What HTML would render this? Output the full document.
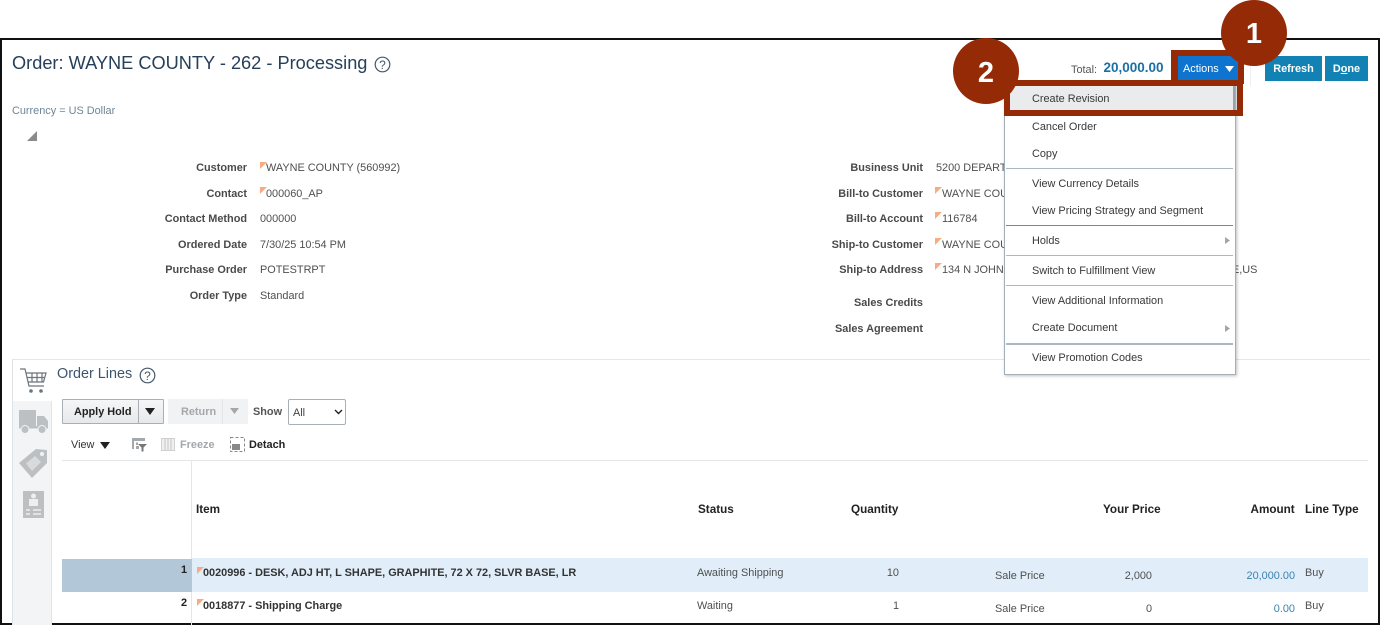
<!DOCTYPE html>
<html><head><meta charset="utf-8">
<style>
html,body{margin:0;padding:0;background:#fff}
#p{position:relative;width:1380px;height:625px;overflow:hidden;background:#fff;font-family:"Liberation Sans",sans-serif;font-size:10.9px;color:#4f4f4f;filter:blur(.3px)}
#p div,#p svg{position:absolute}
.t{white-space:nowrap;line-height:14px}
.l{font-weight:bold;text-align:right;color:#4a4a4a;white-space:nowrap;line-height:14px}
.m{color:#383838;white-space:nowrap;line-height:14px;left:1032px}
.h{font-weight:bold;color:#222;font-size:11.7px;white-space:nowrap;line-height:14px}
.f{width:0;height:0;border-top:7px solid #f8ab80;border-right:7px solid transparent}
.s{left:1006px;width:227px;height:1px;background:#a9b8c4}
.c{width:66px;height:66px;border-radius:50%;background:#952a07;color:#fff;font-weight:bold;font-size:29px;line-height:66px;text-align:center;font-family:"Liberation Sans",sans-serif}
</style></head><body><div id="p">

<div style="left:0;top:38px;width:1380px;height:587px;box-sizing:border-box;border:2px solid #111"></div>

<div class="t" style="left:12px;top:52px;font-size:18.2px;line-height:22px;color:#26405a">Order: WAYNE COUNTY - 262 - Processing</div>
<svg style="left:374px;top:56px" width="17" height="17" viewBox="0 0 17 17"><circle cx="8.500" cy="8.500" r="7.300" fill="none" stroke="#46586a" stroke-width="1.200"/><text x="8.500" y="12.800" font-size="12" text-anchor="middle" fill="#46586a" font-family="Liberation Sans">?</text></svg>
<div class="t" style="left:12px;top:104px;color:#6d8696">Currency = US Dollar</div>
<svg style="left:27px;top:131px" width="11" height="10"><path d="M0 10L10 0V10Z" fill="#8a8a8a"/></svg>

<div class="l" style="left:100px;width:147px;top:161px">Customer</div>
<div class="f" style="left:260px;top:162px"></div><div class="t" style="left:266px;top:161px">WAYNE COUNTY (560992)</div>
<div class="l" style="left:100px;width:147px;top:187px">Contact</div>
<div class="f" style="left:260px;top:187px"></div><div class="t" style="left:266px;top:187px">000060_AP</div>
<div class="l" style="left:100px;width:147px;top:212px">Contact Method</div>
<div class="t" style="left:260px;top:212px">000000</div>
<div class="l" style="left:100px;width:147px;top:238px">Ordered Date</div>
<div class="t" style="left:260px;top:238px">7/30/25 10:54 PM</div>
<div class="l" style="left:100px;width:147px;top:263px">Purchase Order</div>
<div class="t" style="left:260px;top:263px">POTESTRPT</div>
<div class="l" style="left:100px;width:147px;top:289px">Order Type</div>
<div class="t" style="left:260px;top:289px">Standard</div>

<div class="l" style="left:780px;width:143px;top:161px">Business Unit</div>
<div class="t" style="left:936px;top:161px">5200 DEPARTMENT</div>
<div class="l" style="left:780px;width:143px;top:187px">Bill-to Customer</div>
<div class="f" style="left:935px;top:187px"></div><div class="t" style="left:942px;top:187px">WAYNE COUNTY</div>
<div class="l" style="left:780px;width:143px;top:212px">Bill-to Account</div>
<div class="f" style="left:935px;top:212px"></div><div class="t" style="left:942px;top:212px">116784</div>
<div class="l" style="left:780px;width:143px;top:238px">Ship-to Customer</div>
<div class="f" style="left:935px;top:238px"></div><div class="t" style="left:942px;top:238px">WAYNE COUNTY</div>
<div class="l" style="left:780px;width:143px;top:263px">Ship-to Address</div>
<div class="f" style="left:935px;top:263px"></div><div class="t" style="left:942px;top:263px">134 N JOHNSON</div>
<div class="t" style="left:1232px;top:263px">E,US</div>
<div class="l" style="left:780px;width:143px;top:296px">Sales Credits</div>
<div class="l" style="left:780px;width:143px;top:322px">Sales Agreement</div>

<div class="t" style="left:1071px;top:63px;color:#555">Total:</div>
<div class="t" style="left:1103.500px;top:60px;font-size:13.500px;line-height:16px;font-weight:bold;color:#1a70a5">20,000.00</div>
<div style="left:1250px;top:56px;width:1px;height:30px;background:#eceff1"></div>
<div style="left:1265px;top:56px;width:57px;height:25px;background:#1282b4"></div>
<div class="t" style="left:1265px;top:62px;width:57px;text-align:center;color:#fff;font-weight:bold">Refresh</div>
<div style="left:1325px;top:56px;width:43px;height:25px;background:#1282b4"></div>
<div class="t" style="left:1325px;top:62px;width:43px;text-align:center;color:#fff;font-weight:bold">D<u>o</u>ne</div>

<div style="left:1171px;top:50px;width:73px;height:34px;background:#952a07"></div>
<div style="left:1178px;top:56px;width:60px;height:25px;background:#0f74d0"></div>
<div class="t" style="left:1183px;top:62px;color:#fff">Actions</div>
<svg style="left:1224.500px;top:66px" width="9" height="6"><path d="M0 0H9L4.500 6Z" fill="#fff"/></svg>

<div style="left:12px;top:359px;width:1358px;height:1px;background:#e4e7e9"></div>
<div style="left:12px;top:359px;width:1px;height:266px;background:#dfe3e5"></div>
<div style="left:13px;top:401px;width:38px;height:224px;background:#f3f4f5"></div>
<div style="left:51px;top:401px;width:1px;height:224px;background:#e2e5e7"></div>
<svg style="left:19px;top:367px" width="29" height="28" viewBox="0 0 29 28" fill="none" stroke="#6b757c" stroke-width="1.200"><path d="M1 2H6L10 19H25"/><path d="M7 6H27L24.500 15H9"/><path d="M8 10.500H26M13 6V15M18 6V15M23 6V15"/><circle cx="12" cy="24" r="1.200" fill="#6b757c"/><circle cx="22" cy="24" r="1.200" fill="#6b757c"/></svg>
<svg style="left:18px;top:410px" width="31" height="24" viewBox="0 0 31 24" fill="#bcc0c3"><path d="M1 0H18V16H1Z"/><path d="M19 6H26L30 11V16H19Z"/><rect x="1" y="16" width="29" height="2.500"/><circle cx="7" cy="19.500" r="4" stroke="#f3f4f5"/><circle cx="24" cy="19.500" r="4" stroke="#f3f4f5"/></svg>
<svg style="left:18px;top:447px" width="30" height="32" viewBox="0 0 30 32"><path d="M1 16L18 2L29 3V16L14 31Z" fill="#bcc0c3"/><path d="M8 16.500L17 9L23 15L14 24Z" fill="#d8dbdd"/><circle cx="24" cy="7" r="2" fill="#f3f4f5"/></svg>
<svg style="left:22px;top:490px" width="23" height="29" viewBox="0 0 23 29"><rect x="1" y="1" width="21" height="27" fill="#bcc0c3"/><circle cx="11.500" cy="6" r="2.500" fill="#eee"/><path d="M7 9H16V16H7Z" fill="#eee"/><path d="M4 20H8M11 20H19M4 24H8M11 24H19" stroke="#eee" stroke-width="1.500"/></svg>

<div class="t" style="left:57px;top:365px;font-size:14.400px;line-height:18px;color:#3c566e">Order Lines</div>
<svg style="left:139px;top:366.500px" width="17" height="17" viewBox="0 0 17 17"><circle cx="8.500" cy="8.500" r="7.300" fill="none" stroke="#46586a" stroke-width="1.200"/><text x="8.500" y="12.800" font-size="12" text-anchor="middle" fill="#46586a" font-family="Liberation Sans">?</text></svg>

<div style="left:62px;top:399px;width:100px;height:23px;border:1px solid #a8b0b6;background:linear-gradient(#f5f6f7,#e6e8ea);border-radius:1px"></div>
<div style="left:138px;top:399px;width:1px;height:24px;background:#a8b0b6"></div>
<div class="t" style="left:74px;top:405px;font-weight:bold;color:#222">Apply Hold</div>
<svg style="left:145px;top:408px" width="10" height="7"><path d="M0 0H10L5 7Z" fill="#222"/></svg>
<div style="left:168px;top:399px;width:80px;height:25px;background:#f1f2f3"></div>
<div style="left:222px;top:399px;width:1px;height:25px;background:#e3e5e7"></div>
<div class="t" style="left:181px;top:405px;font-weight:bold;color:#a3a8ac">Return</div>
<svg style="left:230px;top:408px" width="9" height="6"><path d="M0 0H9L4.500 6Z" fill="#a3a8ac"/></svg>
<div class="t" style="left:253px;top:405px;font-weight:bold;color:#555">Show</div>
<div style="left:288px;top:399px;width:56px;height:24px;border:1px solid #a8b0b6;border-radius:2px;background:#fff"></div>
<div class="t" style="left:293px;top:406px;color:#444">All</div>
<svg style="left:334px;top:409px" width="9" height="6"><path d="M1 1L4.500 4.500L8 1" fill="none" stroke="#222" stroke-width="1.400"/></svg>

<div class="t" style="left:71px;top:438px;color:#333">View</div>
<svg style="left:100px;top:442px" width="10" height="7"><path d="M0 0H10L5 7Z" fill="#222"/></svg>
<svg style="left:131px;top:437px" width="16" height="15"><path d="M1 1H14V4H1ZM1 4H3V12H1ZM5 5.500H7V8H5ZM5 9H8V12H5Z" fill="#a3a8ac"/><path d="M7 7H16L12.500 10.500V14.500H10.500V10.500Z" fill="#777"/></svg>
<svg style="left:161px;top:438px" width="14" height="13"><rect x=".5" y=".5" width="13" height="12" fill="#f0f0f0" stroke="#d0d0d0"/><path d="M4 1V12M7 1V12M10 1V12" stroke="#c4c4c4"/></svg>
<div class="t" style="left:180px;top:438px;font-weight:bold;color:#a3a8ac">Freeze</div>
<svg style="left:230px;top:437px" width="15" height="15"><rect x=".5" y=".5" width="14" height="14" fill="none" stroke="#888" stroke-dasharray="3 2"/><rect x="2" y="7" width="8" height="6" fill="#888"/></svg>
<div class="t" style="left:249px;top:438px;font-weight:bold;color:#222">Detach</div>

<div style="left:62px;top:460px;width:1306px;height:1px;background:#e4e7e9"></div>
<div style="left:191px;top:461px;width:1px;height:164px;background:#e4e7e9"></div>

<div class="h" style="left:196px;top:503px">Item</div>
<div class="h" style="left:698px;top:503px">Status</div>
<div class="h" style="left:851px;top:503px">Quantity</div>
<div class="h" style="left:1103px;top:503px">Your Price</div>
<div class="h" style="left:1250.500px;top:503px">Amount</div>
<div class="h" style="left:1305px;top:503px">Line Type</div>

<div style="left:192px;top:558px;width:1176px;height:34px;background:#e1eefa"></div>
<div style="left:62px;top:559px;width:130px;height:33px;background:#b2c7d7"></div>
<div class="t" style="left:170px;top:563px;width:17px;text-align:right;font-weight:bold;color:#222">1</div>
<div class="f" style="left:197px;top:567px"></div>
<div class="t" style="left:203px;top:566px;font-weight:bold;color:#333">0020996 - DESK, ADJ HT, L SHAPE, GRAPHITE, 72 X 72, SLVR BASE, LR</div>
<div class="t" style="left:697px;top:566px">Awaiting Shipping</div>
<div class="t" style="left:860px;top:566px;width:39px;text-align:right">10</div>
<div class="t" style="left:995px;top:569px">Sale Price</div>
<div class="t" style="left:1110px;top:569px;width:42px;text-align:right">2,000</div>
<div class="t" style="left:1230px;top:569px;width:65px;text-align:right;color:#3a81ad">20,000.00</div>
<div class="t" style="left:1305px;top:566px">Buy</div>

<div class="t" style="left:170px;top:596px;width:17px;text-align:right;font-weight:bold;color:#222">2</div>
<div class="f" style="left:197px;top:599px"></div>
<div class="t" style="left:203px;top:599px;font-weight:bold;color:#333">0018877 - Shipping Charge</div>
<div class="t" style="left:697px;top:599px">Waiting</div>
<div class="t" style="left:860px;top:599px;width:39px;text-align:right">1</div>
<div class="t" style="left:995px;top:602px">Sale Price</div>
<div class="t" style="left:1110px;top:602px;width:42px;text-align:right">0</div>
<div class="t" style="left:1230px;top:602px;width:65px;text-align:right;color:#3a81ad">0.00</div>
<div class="t" style="left:1305px;top:599px">Buy</div>

<div style="left:1004px;top:84px;width:230px;height:289px;background:#fff;border:1px solid #a3afb8;box-shadow:1px 1px 3px rgba(0,0,0,.25)"></div>
<div style="left:1005px;top:85px;width:230px;height:28px;background:#eaebec"></div>
<div style="left:1233px;top:85px;width:2px;height:25px;background:#9aa3aa"></div>
<div class="m" style="top:92px">Create Revision</div>
<div class="m" style="top:120px">Cancel Order</div>
<div class="m" style="top:147px">Copy</div>
<div class="s" style="top:168px"></div>
<div class="m" style="top:177px">View Currency Details</div>
<div class="m" style="top:204px">View Pricing Strategy and Segment</div>
<div class="s" style="top:225px;background:#6d8aa3"></div>
<div class="m" style="top:234px">Holds</div>
<svg style="left:1225px;top:237px" width="5" height="7"><path d="M0 0L5 3.500L0 7Z" fill="#a5a5a5"/></svg>
<div class="s" style="top:255px"></div>
<div class="m" style="top:264px">Switch to Fulfillment View</div>
<div class="s" style="top:285px"></div>
<div class="m" style="top:294px">View Additional Information</div>
<div class="m" style="top:321px">Create Document</div>
<svg style="left:1225px;top:325px" width="5" height="7"><path d="M0 0L5 3.500L0 7Z" fill="#a5a5a5"/></svg>
<div class="s" style="top:343px;height:1.500px"></div>
<div class="m" style="top:351px">View Promotion Codes</div>

<div style="left:1004px;top:80px;width:239px;height:36px;box-sizing:border-box;border:6px solid #952a07"></div>
<div class="c" style="left:1221px;top:0;line-height:68px">1</div>
<div class="c" style="left:953px;top:38px;line-height:71px">2</div>

</div></body></html>
